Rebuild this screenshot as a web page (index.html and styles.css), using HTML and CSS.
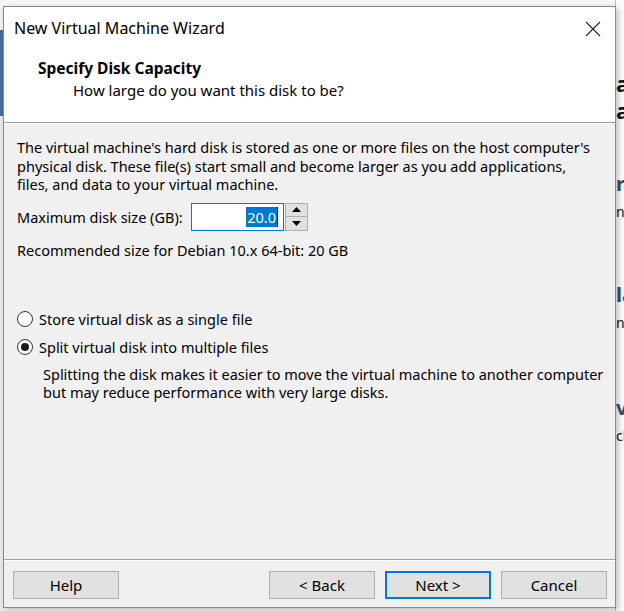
FILE: index.html
```html
<!DOCTYPE html>
<html>
<head>
<meta charset="utf-8">
<link rel="stylesheet" href="styles.css">
</head>
<body>
<div class="desktop">
  <div class="bgwin">
    <div class="bg-left">
      <div class="bg-left-top"></div>
      <div class="bg-left-blue"></div>
    </div>
    <div class="bg-right">
      <div class="frag big f1">ad</div>
      <div class="frag big f2">ad</div>
      <div class="frag head f3">rt</div>
      <div class="frag small f4">nine</div>
      <div class="frag head f5">la</div>
      <div class="frag small f6">nam</div>
      <div class="frag head f7">va</div>
      <div class="frag small f8">ch</div>
    </div>
  </div>

  <div class="dialog">
    <div class="titlebar">
      <span class="title">New Virtual Machine Wizard</span>
      <svg class="close" width="16" height="16" viewBox="0 0 16 16"><path d="M1 1 L15 15 M15 1 L1 15" stroke="#222" stroke-width="1.1" fill="none"/></svg>
    </div>
    <div class="header">
      <div class="h-title">Specify Disk Capacity</div>
      <div class="h-sub">How large do you want this disk to be?</div>
    </div>
    <div class="body">
      <p class="intro">The virtual machine's hard disk is stored as one or more files on the host computer's physical disk. These file(s) start small and become larger as you add applications, files, and data to your virtual machine.</p>
      <div class="size-row">
        <span class="size-label">Maximum disk size (GB):</span>
        <div class="spin">
          <div class="spin-input"><span class="sel">20.0</span><span class="caret"></span></div>
          <div class="spin-btns">
            <div class="spin-btn"><svg width="9" height="5" viewBox="0 0 9 5"><path d="M0 5 L4.5 0 L9 5 Z" fill="#000"/></svg></div>
            <div class="spin-btn"><svg width="9" height="5" viewBox="0 0 9 5"><path d="M0 0 L4.5 5 L9 0 Z" fill="#000"/></svg></div>
          </div>
        </div>
      </div>
      <div class="recommend">Recommended size for Debian 10.x 64-bit: 20 GB</div>
      <label class="radio-row first"><span class="radio"></span>Store virtual disk as a single file</label>
      <label class="radio-row"><span class="radio checked"></span>Split virtual disk into multiple files</label>
      <p class="desc">Splitting the disk makes it easier to move the virtual machine to another computer but may reduce performance with very large disks.</p>
    </div>
    <div class="footer">
      <button class="btn">Help</button>
      <div class="spacer"></div>
      <button class="btn">&lt; Back</button>
      <button class="btn default">Next &gt;</button>
      <button class="btn">Cancel</button>
    </div>
  </div>
</div>
</body>
</html>
```

FILE: styles.css
```css
* { box-sizing: border-box; }
html, body { margin: 0; padding: 0; }
body {
  width: 624px;
  height: 611px;
  overflow: hidden;
  font-family: "Noto Sans", "Open Sans", sans-serif;
  font-size: 14.5px;
  color: #000;
  background: #f3f3f3;
}
.desktop {
  position: relative;
  width: 624px;
  height: 611px;
  overflow: hidden;
}
.bgwin {
  position: absolute;
  inset: 0;
  background: #f7f7f7;
}
.bg-left {
  position: absolute;
  left: 0; top: 0;
  width: 4px;
  height: 611px;
  background: #ececec;
}
.bg-left-top {
  height: 30px;
  background: #f4f4f4;
}
.bg-left-blue {
  height: 86px;
  background: #4b6c9c;
}
.bg-right {
  position: absolute;
  left: 615px;
  top: 0;
  width: 200px;
  height: 611px;
  background: #fbfbfb;
  border-left: 1px solid #bcbcbc;
  padding-top: 70px;
  font-family: "Noto Sans", sans-serif;
}
.frag { white-space: nowrap; line-height: 26px; }
.big { font-size: 22px; line-height: 27px; font-weight: 700; color: #111; }
.head { font-size: 20px; font-weight: 700; color: #2b4f7a; }
.small { font-size: 14px; color: #111; }
.f2 { margin-top: 0; }
.f3 { margin-top: 47px; }
.f4 { margin-top: 2px; }
.f5 { margin-top: 57px; }
.f6 { margin-top: 2px; }
.f7 { margin-top: 59px; }
.f8 { margin-top: 2px; }

.dialog {
  position: absolute;
  left: 3px;
  top: 6px;
  width: 613px;
  height: 602px;
  border: 1px solid #8a8a8a;
  background: #f0f0f0;
  display: flex;
  flex-direction: column;
  box-shadow: 2px 2px 6px rgba(0,0,0,0.25);
}
.titlebar {
  background: #fff;
  height: 44px;
  padding: 12px 0 0 10px;
  display: flex;
  align-items: flex-start;
  justify-content: space-between;
}
.title {
  font-size: 16px;
  line-height: 18px;
  color: #000;
}
.close {
  margin: 2px 14px 0 0;
}
.header {
  background: #fff;
  height: 72px;
  padding: 8px 0 0 34px;
  border-bottom: 1px solid #a0a0a0;
}
.h-title {
  font-weight: 700;
  font-size: 15.5px;
  line-height: 18px;
}
.h-sub {
  margin-top: 4px;
  padding-left: 35px;
  font-size: 15px;
  line-height: 18px;
}
.body {
  flex: 1;
  padding: 14px 13px 0 13px;
  border-top: 1px solid #fff;
}
.intro {
  margin: 0;
  line-height: 18.5px;
  width: 582px;
}
.size-row {
  display: flex;
  align-items: center;
  margin-top: 9px;
  height: 28px;
}
.size-label {
  width: 174px;
  line-height: 18px;
}
.spin {
  display: flex;
  height: 28px;
}
.spin-input {
  width: 93px;
  height: 28px;
  background: #fff;
  border: 1px solid #0078d7;
  display: flex;
  align-items: center;
  justify-content: flex-end;
  padding-right: 5px;
}
.sel {
  background: #0078d7;
  color: #fff;
  line-height: 20px;
  padding: 0 1px;
}
.caret {
  width: 1px;
  height: 20px;
  background: #000;
}
.spin-btns {
  width: 23px;
  height: 28px;
  display: flex;
  flex-direction: column;
  margin-left: 1px;
}
.spin-btn {
  flex: 1;
  background: #e1e1e1;
  border: 1px solid #adadad;
  display: flex;
  align-items: center;
  justify-content: center;
}
.spin-btn + .spin-btn { border-top: none; }
.recommend {
  margin-top: 10px;
  line-height: 18px;
}
.radio-row {
  display: flex;
  align-items: center;
  height: 18px;
  line-height: 18px;
  margin-top: 10px;
}
.radio-row.first { margin-top: 51px; }
.radio {
  width: 16px;
  height: 16px;
  border-radius: 50%;
  border: 1px solid #333;
  background: #fff;
  margin-right: 6px;
  flex: none;
  display: flex;
  align-items: center;
  justify-content: center;
}
.radio.checked::after {
  content: "";
  width: 8px;
  height: 8px;
  border-radius: 50%;
  background: #1a1a1a;
}
.desc {
  margin: 9px 0 0 26px;
  line-height: 18px;
  width: 562px;
}
.footer {
  height: 48px;
  border-top: 1px solid #a0a0a0;
  box-shadow: inset 0 1px 0 #fff;
  padding: 11px 8px 0 9px;
  display: flex;
  align-items: flex-start;
  gap: 10px;
}
.spacer { flex: 1; }
.btn {
  width: 106px;
  height: 28px;
  background: #e1e1e1;
  border: 1px solid #adadad;
  font-family: inherit;
  font-size: 15px;
  color: #000;
  padding: 0;
}
.btn.default {
  border: 2px solid #0078d7;
}
```
